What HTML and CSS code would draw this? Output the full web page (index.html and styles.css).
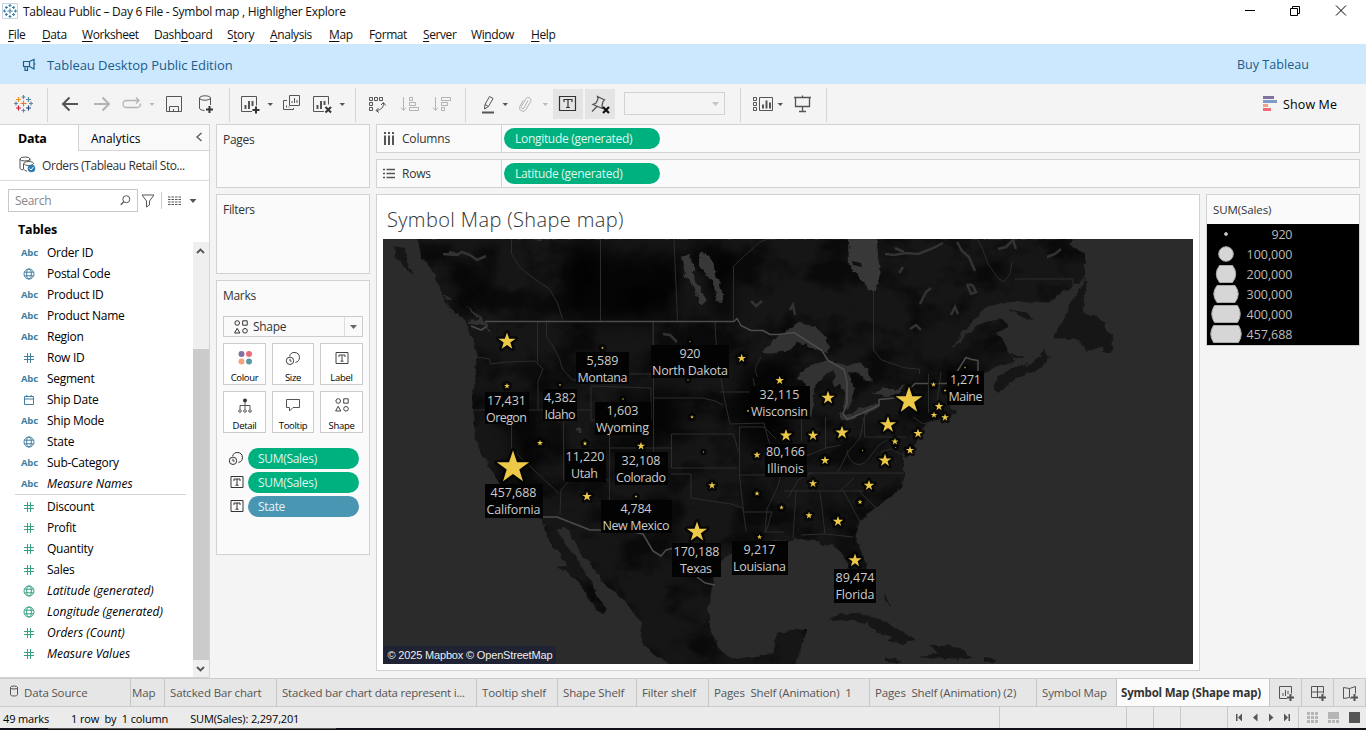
FILE: index.html
```html
<!DOCTYPE html>
<html lang="en">
<head>
<meta charset="utf-8">
<title>Tableau Public – Day 6 File</title>
<link rel="stylesheet" href="styles.css">
</head>
<body>
<svg class="defs" width="0" height="0">
  <defs>
    <symbol id="globe" viewBox="0 0 12 12"><g fill="none" stroke="currentColor" stroke-width="1"><circle cx="6" cy="6" r="5"/><ellipse cx="6" cy="6" rx="2.3" ry="5"/><path d="M1.5 4.2h9M1.5 7.8h9"/></g></symbol>
    <symbol id="hash" viewBox="0 0 12 12"><path d="M4.5 1v10M7.5 1v10M1 4.5h10M1 7.5h10" fill="none" stroke="currentColor"/></symbol>
    <symbol id="cal" viewBox="0 0 12 12"><path d="M1.5 2.5h9v8h-9zM1.5 5h9M3.8 .8v2M8.2 .8v2" fill="none" stroke="currentColor"/></symbol>
    <symbol id="tbox" viewBox="0 0 14 14"><path d="M1 1.5h12v11H1z" fill="none" stroke="currentColor"/><path d="M4 6V4h6v2M7 4v6.2M5.5 10.2h3" fill="none" stroke="currentColor"/></symbol>
    <symbol id="size" viewBox="0 0 16 16"><path d="M4.6 6.2a5 5 0 1 1 5.8 6.2" fill="none" stroke="currentColor"/><circle cx="5" cy="10.8" r="3.7" fill="none" stroke="currentColor"/><path d="M5 8.8v2.3h1.6" fill="none" stroke="currentColor"/></symbol>
    <symbol id="shapes" viewBox="0 0 14 14"><g fill="none" stroke="currentColor"><circle cx="3.2" cy="3" r="2.3"/><path d="M8.7.8h4.5v4.4H8.7zM3.2 8.3 5.8 13H.6z"/><circle cx="11" cy="10.8" r="2.3"/></g></symbol>
    <path id="s" class="star" d="M0-1 .235-.309.951-.309.37.118.588.809 0 .382-.588.809-.37.118-.951-.309-.235-.309z"/>
  </defs>
</svg>
<div class="app">
  <header class="titlebar">
    <svg class="app-icon" viewBox="0 0 16 16"><path d="M.5.5h15v15H.5z" fill="#fff" stroke="#c4d4de"/><g stroke="#3c7fa8" stroke-width="1.1" fill="none"><path d="M8 5.5v5M5.5 8h5M8 1v3M6.5 2.5h3M8 12v3M6.5 13.5h3M1 8h3M2.5 6.5v3M12 8h3M13.500 6.500v3M4.300 3v3M3 4.500h3M11.700 3v3M10 4.500h3M4.300 10v3M3 11.500h3M11.700 10v3M10 11.500h3"/></g></svg>
    <span class="title">Tableau Public – Day 6 File - Symbol map , Highligher Explore</span>
    <svg class="winctl" viewBox="1240 0 126 22"><g fill="none" stroke="#000"><path d="M1245 10.500h10M1290.500 8.500h7v7h-7zM1292.500 8.500v-2h7v7h-2M1336 5.500l10 10M1346 5.500l-10 10"/></g></svg>
  </header>
  <nav class="menu">
    <span style="width:34px"><u>F</u>ile</span><span style="width:40px"><u>D</u>ata</span><span style="width:72px"><u>W</u>orksheet</span><span style="width:73px">Dash<u>b</u>oard</span><span style="width:43px">S<u>t</u>ory</span><span style="width:59px"><u>A</u>nalysis</span><span style="width:40px"><u>M</u>ap</span><span style="width:54px">F<u>o</u>rmat</span><span style="width:48px"><u>S</u>erver</span><span style="width:60px">Wi<u>n</u>dow</span><span><u>H</u>elp</span>
  </nav>
  <div class="banner">
    <svg width="16" height="14" viewBox="0 0 16 14"><path d="M13 1.500v9.500L8.500 8.500H2.500v-5h6zM4 8.500v4h2.500v-4M13 6h1.500M8.500 3.500v5" fill="none" stroke="#1a5c8a" stroke-width="1.200"/></svg>
    <span class="edition">Tableau Desktop Public Edition</span>
    <span class="buy">Buy Tableau</span>
  </div>
  <div class="toolbar">
    <svg viewBox="0 84 47 40"><g fill="none" stroke-width="1.200"><path d="M23.500 100.500v6M20.500 103.500h6" stroke="#e8762c"/><path d="M23.500 95v4M21.500 97h4M14 103.500h4M16 101.500v4" stroke="#5b879b"/><path d="M23.500 108.500v4M21.500 110.500h4M29 103.500h4M31 101.500v4" stroke="#6a83a5"/><path d="M18.500 97v5M16 99.500h5" stroke="#eb912c"/><path d="M28.500 97v5M26 99.500h5" stroke="#59879b"/><path d="M18.500 105.500v5M16 108h5" stroke="#c72035"/><path d="M28.500 105.500v5M26 108h5" stroke="#1f457e"/></g></svg>
    <i class="sep"></i>
    <svg viewBox="48 84 38 40"><path d="M78 104H63M69.500 97.500 63 104l6.500 6.500" class="k k2"/></svg>
    <svg viewBox="86 84 31 40"><path d="M94 104h15M102.500 97.500l6.500 6.500-6.500 6.500" class="l k2"/></svg>
    <svg viewBox="117 84 43 40"><path d="M137 107.500h-10.500a3.500 3.500 0 0 1 0-7H139M136 97.500l3 3-3 3M137 107.500a3.500 3.500 0 0 0 3.500-4" class="l" stroke-width="1.300"/><path d="M149.500 103h5l-2.500 3z" fill="#bbb"/></svg>
    <svg viewBox="160 84 30 40"><path d="M166.500 96.500h15v15h-15zM169.500 111.500v-5h9v5M173.500 111v-2" class="k"/></svg>
    <svg viewBox="190 84 39 40"><g class="k"><ellipse cx="205" cy="98" rx="5.500" ry="2.200"/><path d="M199.500 98v10c0 1.500 2 2.300 5 2.500M210.500 98v7"/></g><path d="M206 109.500h7M209.500 106v7" class="b"/></svg>
    <i class="sep"></i>
    <svg viewBox="230 84 46 40"><path d="M252 111.500h-10.500v-15h15v9" class="k"/><path d="M245.500 109v-4M249 109v-8M252.500 106v-5" class="k k2"/><path d="M252.500 110h7M256 106.500v7" class="b"/><path d="M267.500 103h5.500l-2.750 3z" fill="#555"/></svg>
    <svg viewBox="276 84 30 40"><path d="M289.500 95.500h10v10h-10zM287 100.500h-3.500v9h10V108M292 103v-2M294.500 103v-5M297 103v-3M286.500 107.500v-2M289 107.500v-1" class="k"/></svg>
    <svg viewBox="306 84 49 40"><path d="M324 111.500h-10.500v-15h15v8" class="k"/><path d="M317.500 109v-4M321 109v-8M324.500 105v-4" class="k k2"/><path d="M325.500 107l5.500 5.500M331 107l-5.500 5.500" class="b"/><path d="M339.500 103h5.500l-2.750 3z" fill="#555"/></svg>
    <i class="sep"></i>
    <svg viewBox="356 84 37 40"><path d="M369.500 97.500h3v3h-3zM374.500 97.500h3v3h-3zM379.500 97.500h3v3h-3zM369.500 102.500h3v3h-3zM369.500 107.500h3v3h-3zM383.500 103c.5 4-2.500 7-7 7.500M381 105l2.500-2.500 2 3M378.500 108l-2.500 2.500 3 2" class="k"/></svg>
    <svg viewBox="393 84 33 40"><path d="M403.500 97v13M401 107.500l2.500 3 2.500-3M409.500 97.500h3v3h-3zM409.500 102.500h6v3h-6zM409.500 107.500h9v3h-9z" class="l"/></svg>
    <svg viewBox="426 84 39 40"><path d="M435.500 97v13M433 107.500l2.500 3 2.500-3M441.500 97.500h9v3h-9zM441.500 102.500h6v3h-6zM441.500 107.500h3v3h-3z" class="l"/></svg>
    <i class="sep"></i>
    <svg viewBox="466 84 46 40"><path d="M484.500 109l.5-4.500 4.500-8 3.500 2-4.500 8zM485 104.500l3.500 2" class="k"/><path d="M482 112.500h12" class="k k2"/><path d="M502.500 103h5.500l-2.750 3z" fill="#555"/></svg>
    <svg viewBox="512 84 41 40"><path d="M528 100.500l-4 7.500a1.500 1.500 0 0 1-2.600-1.500l4.600-8a2.800 2.800 0 0 1 4.800 2.800l-5 8.600a3.500 3.500 0 0 1-6-3.500l3.500-6" class="l"/><path d="M542.500 103h5.500l-2.750 3z" fill="#bbb"/></svg>
    <svg class="on" viewBox="553 84 30 40"><path d="M559.500 96.500h16v14h-16zM564 102v-2.500h8v2.500M568 99.500v8M566 107.500h4" fill="none" stroke="#333" stroke-width="1.200"/></svg>
    <i></i>
    <svg class="on" viewBox="585 84 30 40"><path d="M597.500 96.500l7 3.500-1.500 1.500-1 4 .5 3-9.500-4 3-1.500 2-4zM597 106.500l-5 5" class="k" stroke-width="1.300"/><path d="M603 107l6 6M609 107l-6 6" stroke="#111" stroke-width="2.200"/></svg>
    <div class="fit"><div class="combo"><svg width="8" height="5"><path d="M0 0h7L3.500 4z" fill="#c4c4c4"/></svg></div></div>
    <i class="sep"></i>
    <svg viewBox="741 84 47 40"><path d="M753.500 97.500h3v3h-3zM753.500 102.500h3v3h-3zM753.500 107.500h3v3h-3zM759.500 97.500h13v13h-13z" class="k"/><path d="M763 108.500v-4M766.500 108.500v-8M770 108.500v-6" class="k k2"/><path d="M777.500 103h5.500l-2.750 3z" fill="#555"/></svg>
    <svg viewBox="788 84 38 40"><path d="M794 97.500h17M795.500 98v8.500h14V98M802.500 95.500v2M802.500 107v4M799 111.500h7" class="k" stroke-width="1.300"/></svg>
    <i class="sep"></i>
    <div class="showme"><svg width="15" height="16"><path d="M0 0h11v3H0z" fill="#80729f"/><path d="M0 4h14v3H0z" fill="#7f9bcb"/><path d="M0 8h5v3H0z" fill="#eea385"/><path d="M0 12h8v3H0z" fill="#ee6b78"/></svg><span>Show Me</span></div>
  </div>

  <main class="work">
    <aside class="data">
      <div class="dtabs"><b>Data</b><span>Analytics<svg width="8" height="10" viewBox="0 0 8 10"><path d="M6.500 1 2 5l4.500 4" class="k" stroke-width="1.300"/></svg></span></div>
      <div class="source"><svg width="18" height="17" viewBox="0 0 18 17"><g class="k"><ellipse cx="6" cy="3" rx="5" ry="2"/><path d="M1 3v9c0 1 1.500 1.700 3 2M4.500 7.500v6M5 7.500c0-1 2-2 4.800-2s4.700 1 4.700 2-2 2-4.700 2S5 8.500 5 7.500M11 3v2M5 13.500c.5 1 1.500 1.300 3 1.500"/></g><circle cx="12.500" cy="12.500" r="3.800" fill="#2f7fae"/><path d="M10.500 12.500l1.500 1.500 2.500-3" stroke="#fff" fill="none"/></svg><span>Orders (Tableau Retail Sto...</span></div>
      <div class="searchrow">
        <div class="search"><span>Search</span><svg width="11" height="11"><circle cx="6.300" cy="4.200" r="3.500" class="k"/><path d="M3.800 6.800.8 9.800" class="k" stroke-width="1.300"/></svg></div>
        <svg width="14" height="14"><path d="M1 1h12L8.500 7v4l-3 2V7z" class="k"/></svg>
        <i></i>
        <svg width="30" height="12"><path d="M0 2h13M0 4.500h13M0 7h13M0 9.500h13" stroke="#555" stroke-dasharray="2.500 1"/><path d="M21.500 4h7L25 8z" fill="#555"/></svg>
      </div>
      <h3>Tables</h3>
      <div class="fieldwrap">
        <ul class="fields">
          <li><em>Abc</em>Order ID</li>
          <li><svg><use href="#globe"/></svg>Postal Code</li>
          <li><em>Abc</em>Product ID</li>
          <li><em>Abc</em>Product Name</li>
          <li><em>Abc</em>Region</li>
          <li><svg><use href="#hash"/></svg>Row ID</li>
          <li><em>Abc</em>Segment</li>
          <li><svg><use href="#cal"/></svg>Ship Date</li>
          <li><em>Abc</em>Ship Mode</li>
          <li><svg><use href="#globe"/></svg>State</li>
          <li><em>Abc</em>Sub-Category</li>
          <li class="it"><em>Abc</em>Measure Names</li>
          <li class="rule"></li>
          <li class="m"><svg><use href="#hash"/></svg>Discount</li>
          <li class="m"><svg><use href="#hash"/></svg>Profit</li>
          <li class="m"><svg><use href="#hash"/></svg>Quantity</li>
          <li class="m"><svg><use href="#hash"/></svg>Sales</li>
          <li class="m it"><svg><use href="#globe"/></svg>Latitude (generated)</li>
          <li class="m it"><svg><use href="#globe"/></svg>Longitude (generated)</li>
          <li class="m it"><svg><use href="#hash"/></svg>Orders (Count)</li>
          <li class="m it"><svg><use href="#hash"/></svg>Measure Values</li>
        </ul>
        <div class="scroll">
          <svg width="15" height="18"><path d="M4 11l3.500-3.500L11 11" fill="none" stroke="#555" stroke-width="1.800"/></svg>
          <div class="thumb"></div>
          <svg width="15" height="17"><path d="M4 7l3.500 3.500L11 7" fill="none" stroke="#555" stroke-width="1.800"/></svg>
        </div>
      </div>
    </aside>

    <section class="cards">
      <div class="card pages">Pages</div>
      <div class="card filters">Filters</div>
      <div class="card marks">
        <div>Marks</div>
        <div class="marktype"><svg width="14" height="14"><use href="#shapes"/></svg><span>Shape</span><i><svg width="8" height="5"><path d="M0 0h7L3.500 4z" fill="#666"/></svg></i></div>
        <div class="btns">
          <div><svg width="16" height="16"><circle cx="4.500" cy="4" r="3" fill="#80729f"/><circle cx="12" cy="4" r="3" fill="#ee6b78"/><circle cx="4.500" cy="11.500" r="3" fill="#f2a27d"/><circle cx="12" cy="11.500" r="3" fill="#5a9aa5"/></svg>Colour</div>
          <div><svg width="16" height="16"><use href="#size"/></svg>Size</div>
          <div><svg width="16" height="16" viewBox="-1 -1 16 16"><use href="#tbox" width="14" height="14"/></svg>Label</div>
          <div><svg width="16" height="16"><circle cx="8" cy="2.500" r="2" fill="#333"/><path d="M8 3v8M3 11V7.500h10V11" class="k"/><g class="k"><circle cx="3" cy="13" r="1.300"/><circle cx="8" cy="13" r="1.300"/><circle cx="13" cy="13" r="1.300"/></g></svg>Detail</div>
          <div><svg width="16" height="16"><path d="M1.500 1.500h13v8H8l-3.500 3.500v-3.500h-3z" class="k"/></svg>Tooltip</div>
          <div><svg width="16" height="16" viewBox="-1 0 16 16"><use href="#shapes" width="14" height="14"/></svg>Shape</div>
        </div>
        <div class="enc"><svg width="16" height="16"><use href="#size"/></svg><span class="pill">SUM(Sales)</span></div>
        <div class="enc"><svg width="14" height="14"><use href="#tbox"/></svg><span class="pill">SUM(Sales)</span></div>
        <div class="enc"><svg width="14" height="14"><use href="#tbox"/></svg><span class="pill dim">State</span></div>
      </div>
    </section>

    <section class="right">
      <div class="shelf"><div><svg width="12" height="13"><path d="M2 0v2M6 0v2M10 0v2M2 3.500V13M6 3.500V13M10 3.500V13" stroke="#555" stroke-width="2"/></svg>Columns</div><span class="pill">Longitude (generated)</span></div>
      <div class="shelf"><div><svg width="12" height="13"><path d="M0 2.500h2M0 6.500h2M0 10.500h2M3.500 2.500H12M3.500 6.500H12M3.500 10.500H12" stroke="#555" stroke-width="1.600"/></svg>Rows</div><span class="pill">Latitude (generated)</span></div>
      <div class="viewrow">
        <div class="view">
          <h1>Symbol Map (Shape map)</h1>
          <svg class="map" viewBox="383 239 810 425">
            <defs>
              <filter id="rough" x="-5%" y="-5%" width="110%" height="110%"><feTurbulence type="fractalNoise" baseFrequency=".14" numOctaves="3" seed="4"/><feDisplacementMap in="SourceGraphic" scale="6" xChannelSelector="R" yChannelSelector="G"/></filter>
              <filter id="tex" x="0" y="0" width="100%" height="100%"><feTurbulence type="fractalNoise" baseFrequency=".022 .028" numOctaves="4" seed="11"/><feColorMatrix values="0 0 0 0 0  0 0 0 0 0  0 0 0 0 0  4 0 0 0 -1.750"/><feComposite in2="SourceGraphic" operator="in"/></filter>
              <filter id="blur"><feGaussianBlur stdDeviation="9"/></filter>
              <path id="land" d="M418 239 421 258 427 263 433 272 438 283 441 292 446 303 454 311 466 321 468 330 472 340 476 350 477 357 476 370 475 380 472 392 472 400 474 420 474 430 476 439 480 450 486 462 493 473 498 481 502 490 518 498 528 503 536 512 542 520 547 537 553 546 560 553 566 566 557 567 569 573 580 583 585 591 590 602 602 614 606 609 600 600 595 593 592 582 584 571 576 557 569 550 564 541 558 530 563 526 568 531 574 541 579 550 583 557 593 567 601 578 607 587 616 592 627 603 634 614 642 623 640 632 642 642 657 657 670 665H797L799 655 803 643 807 629 796 630 777 633 774 645 773 653 757 657 745 657 737 659 728 656 720 650 714 640 710 627 708 607 713 585 714 570 722 560 732 553 742 551 754 558 768 562 780 558 772 541H780L800 539 815 539 823 546 832 543 842 553 847 563 851 577 857 590 864 592 867 577 866 565 860 550 855 537 860 522 866 515 877 507 884 501 890 497 903 487 904 478 904 465 901 452 906 458 914 447 919 437 917 434 927 423 940 420 957 413 950 407 948 397 952 387 968 379 985 373 1000 366 1015 362 1007 349 1002 337 993 334 1008 327 1003 319 990 321 978 326 968 333 953 348 960 335 967 327 978 316 990 305 1020 302 1050 303 1060 293 1072 287 1085 279V255L1078 250 1070 245 1072 239Z"/>
            </defs>
            <path d="M383 239h810v425H383z" fill="#2b2b2b"/>
            <g filter="url(#rough)" fill="#151515">
              <use href="#land"/>
              <path d="M394 246l10 2 4 14 6 14-10-9-8-11zM993 389l5-12 14-9 17-4 12-7 1-8 8 8-9 12-16 5-14 8-13 10zM1010 354l14 2 2 3-12-1zM1053 338l10-17 9-19 13-22 3 2-5 20-1 11 14 2 8 6 2 11 7 4-1 16-8 0-5-5-12 5-5-9-8-4zM1010 309l20 5 3 6-12-3zM829 621l11-7 18-1 22 6 20 12 17 9-12 3-18-1 6-5-14-4-13-10-19-3zM930 645l14 0 20 5 8 8-11 1-13-2-11 2-18-2 20-3zM885 657l11 1 5 5-14-1zM984 657l13 2-3 3-10 0zM885 594l4 6-2 4-3-4zM888 602l3 2-1 2z"/>
            </g>
            <use href="#land" filter="url(#tex)" opacity=".5"/>
            <g fill="#060606" opacity=".75" filter="url(#blur)"><path d="M565 245h35l28 20 20 45-15 12h-60zM610 262l60-10 8 60-40 8z"/><path d="M712 250h20v70h-18zM455 262l20 15 5 20-15 8zM500 400h40v70l-20-10zM740 370h50v80h-45z"/><path d="M640 390h40v50h-40z"/></g>
            <g filter="url(#rough)" fill="#333">
              <path d="M762 352l8-7 10-11 14-7 6-5 8 3 8 1 10 12 3 14-11-2-12-5-9-3-8 8-14 3z"/>
              <path d="M797 379l8-11 16-7 12 0 4 5-10 8-6 6-7 8-1 20-4 11-4-2 2-16-3-8 2-10zM829 361l8 1 10 4 10-3 10 4 5 14-8-2-8-6-7-1 4 14-1 14-4 10-4-4 1-14-5-8-6 3 1-14zM840 412l6 3 10-4 11-4 10-5 3 2-9 7-11 4-12 6-8-3zM872 393l10-4 14 0 9-6-4 10-14 4z"/>
              <path d="M465 305l10 7 8 8 4 3 4 12-6-9-14-2-5-3 12-1-6-8zM443 294l10 6-7-1z"/>
            </g>
            <g filter="url(#rough)" fill="#2d2d2d"><path d="M848 238h29l1 19 3 18-6 16-7-2-11-15-8-9zM681 257l9-3 3 8 0 14 5 8 9 17-5 5-6-12-5-13-6-4-1-10zM699 252l8 1 6 8 4 18 6 13 0 10-5-1-4-15-8-12-7-9z" fill="#383838"/></g>
            <path d="M852 261l9 2 1 4-9-2z" fill="#111"/>
            <g class="lk">
              <path d="M443 254l14 1 5-3 8 3 7 5 9-4M458 255l-9-3M885 254l9 1 12-2 12 1 13-5 12-6M895 248l9 4M957 242l5 9 7 6 6 14M998 249l8-2 7-7 3 9M1047 257l8-3 6-5M920 304l6-12 5-4M967 284l4 10 5-2-3-6-4-2M790 310l3-5 2 10M751 301l5 5 6-5M663 334l7 1 5 5 2 2M910 329l6-4 5 5M951 315l4-8 3 7M899 273l4-6M576 430l4-2M580 428l0 5"/>
            </g>
            <g class="st">
              <path d="M511.500 239v15l8 13 15 12 15 10 8 14 5 16M600.500 239v82M674 239l3.500 82M733.500 321v-55l26-24 8-3M873.500 290v60l8 10 12 4 12 4 14 1v5M1015 279h58v8M978 240l5 10 5 14 10 14 6 4 6-8 2-12M477 357l12 2 2 5 16-2 28-1 8 8-5 12v28M537.500 321v41M546.500 321v16l7 10 6 12 3 10 10 11h17M472 410h119M511.500 411v38l47 44M563.500 410v70M591 386v34h60V388zM629 374h24v-53M653.500 321v160M653 398h50l12 3 8 4M653 364h67l-4-22-1-20M671.500 434h62l5 18M671.500 434v14h-62v-28M671.500 448v20h66M609.500 420v107M570 480l-9 10-1 25M564 480h45M720 392h36l-3-14M720 372l5 30 5 22 34-1M739.500 426v50l4 36M671 474h20v24l20 3 20 3 12 4 3 23M739.500 475h38M744 512h28l-6 20h18M740 427h24l12 12M758 377c-6-8 0-14 3-20M764 423c5 20 9 34 16 48 2 11-6 23-13 38l-2 24M796 491l-3 47M820 491l5 43-24 1M825 534l28 3M784 491h68l20 0M808 473h96M788 498l10-18 14-7M801.500 415v26M825.500 417v31M786 460l20-4 20-8 15-3M864.500 407v30h42M864 418l-4 20-12 14-10 20M847 450c2 17 16 18 22 8l10-13 8-5M840 491l14-13M859 491l25 25 14 8M843 490l14 26 5 10M928.500 374v40M941 372l-5 38M913 417l10 7 14-4M881 452l10-3 12 6"/>
            </g>
            <path class="nat" d="M485 321.500h249l3-3 4 7 10 5 12 0 7 4h8l16-2 28 18 6 10 16 9 3 12 0 22-4 10 4 6 12-5 20-9 0-6 22-2 14-14h31l6-4 14-22 6 2 6 1 0 17 4 8M542 517h15l33 13h35l18 4 10 17 8 5 5-6 8-2M697 577l8 6 10 2M471 326l10 4 5-3"/>
            <g class="stars">
              <use href="#s" transform="translate(507 341.500)scale(9)"/><use href="#s" transform="translate(507 386)scale(3)"/><use href="#s" transform="translate(602.500 348)scale(1.500)"/><use href="#s" transform="translate(560 385)scale(1.300)"/><use href="#s" transform="translate(623 399)scale(1.200)"/><use href="#s" transform="translate(690 341.500)scale(1)"/><use href="#s" transform="translate(688 380)scale(1)"/><use href="#s" transform="translate(741.700 358.300)scale(4.500)"/><use href="#s" transform="translate(779.700 380.500)scale(4.500)"/><use href="#s" transform="translate(748 411)scale(1.500)"/><use href="#s" transform="translate(692 417)scale(2)"/><use href="#s" transform="translate(828 397.800)scale(7)"/><use href="#s" transform="translate(540 443)scale(3.200)"/><use href="#s" transform="translate(585 443.500)scale(2.400)"/><use href="#s" transform="translate(641 446)scale(4.300)"/><use href="#s" transform="translate(513 467.500)scale(17)"/><use href="#s" transform="translate(587 496.500)scale(5)"/><use href="#s" transform="translate(636 496.500)scale(1.400)"/><use href="#s" transform="translate(703.500 452)scale(1)"/><use href="#s" transform="translate(712 485.500)scale(3.900)"/><use href="#s" transform="translate(697 532)scale(10.500)"/><use href="#s" transform="translate(757 455)scale(3.800)"/><use href="#s" transform="translate(757 493.500)scale(2.800)"/><use href="#s" transform="translate(786 435.500)scale(6.500)"/><use href="#s" transform="translate(813 435.500)scale(5.500)"/><use href="#s" transform="translate(842 432.700)scale(7)"/><use href="#s" transform="translate(825 460.500)scale(4.700)"/><use href="#s" transform="translate(862.500 450.500)scale(1)"/><use href="#s" transform="translate(888 424.800)scale(8.500)"/><use href="#s" transform="translate(909 400.500)scale(14)"/><use href="#s" transform="translate(885 460.500)scale(6.800)"/><use href="#s" transform="translate(895.700 447.500)scale(.8)"/><use href="#s" transform="translate(895 441.500)scale(3.600)"/><use href="#s" transform="translate(918 433.500)scale(4.800)"/><use href="#s" transform="translate(910 450.300)scale(4.300)"/><use href="#s" transform="translate(933.500 384.500)scale(2.700)"/><use href="#s" transform="translate(945 390.500)scale(1.500)"/><use href="#s" transform="translate(934 415)scale(3.500)"/><use href="#s" transform="translate(945 417.500)scale(4)"/><use href="#s" transform="translate(939 406.500)scale(4.500)"/><use href="#s" transform="translate(965 367.500)scale(1.200)"/><use href="#s" transform="translate(813 483.500)scale(4.300)"/><use href="#s" transform="translate(869 485.500)scale(5.500)"/><use href="#s" transform="translate(860 502)scale(2.700)"/><use href="#s" transform="translate(781.500 507.500)scale(2.400)"/><use href="#s" transform="translate(809 515.500)scale(3.700)"/><use href="#s" transform="translate(838 521.500)scale(5.500)"/><use href="#s" transform="translate(855 560.500)scale(7)"/><use href="#s" transform="translate(759.500 537)scale(2.700)"/>
            </g>
            <g fill="#030303"><path d="M576 352h53v32h-53zM651 345h78v33h-78zM485 392h44v32h-44zM543 389h34v32h-34zM595 402h56v33h-56zM750 386h60v33h-60zM565 449h41v33h-41zM615 452h53v33h-53zM485 484h58v34h-58zM601 500h71v33h-71zM672 543h49v34h-49zM732 541h56v34h-56zM765 444h42v33h-42zM834 569h42v34h-42zM947 371h37v34h-37z"/></g>
            <g class="lab">
              <text x="602.500" y="365" textLength="32">5,589</text><text x="602.500" y="382" textLength="50">Montana</text>
              <text x="690" y="358" textLength="21">920</text><text x="690" y="375" textLength="76">North Dakota</text>
              <text x="506.500" y="405" textLength="39">17,431</text><text x="506.500" y="422" textLength="41">Oregon</text>
              <text x="560" y="402" textLength="32">4,382</text><text x="560" y="419" textLength="31">Idaho</text>
              <text x="622.500" y="415" textLength="32">1,603</text><text x="622.500" y="432" textLength="53">Wyoming</text>
              <text x="779.500" y="399" textLength="40">32,115</text><text x="779.500" y="416" textLength="57">Wisconsin</text>
              <text x="585" y="461" textLength="39">11,220</text><text x="584.500" y="478" textLength="27">Utah</text>
              <text x="641" y="465" textLength="39">32,108</text><text x="641" y="482" textLength="50">Colorado</text>
              <text x="513.500" y="497" textLength="46">457,688</text><text x="513.500" y="514" textLength="54">California</text>
              <text x="636" y="513" textLength="31">4,784</text><text x="636" y="530" textLength="67">New Mexico</text>
              <text x="696.500" y="556" textLength="46">170,188</text><text x="696" y="573" textLength="32">Texas</text>
              <text x="759.500" y="554" textLength="32">9,217</text><text x="759.500" y="571" textLength="53">Louisiana</text>
              <text x="785.500" y="456" textLength="39">80,166</text><text x="785.500" y="473" textLength="37">Illinois</text>
              <text x="855" y="582" textLength="39">89,474</text><text x="855" y="599" textLength="39">Florida</text>
              <text x="965.500" y="384" textLength="31">1,271</text><text x="965.500" y="401" textLength="34">Maine</text>
            </g>
            <path d="M383 646h173v18H383z" fill="#1f2333"/>
            <text class="credit" x="387.500" y="659" textLength="165">© 2025 Mapbox © OpenStreetMap</text>
          </svg>
        </div>
        <div class="legend">
          <div class="lt">SUM(Sales)</div>
          <svg width="152" height="121" viewBox="1207 224 152 121"><path d="M1207 224h152v121h-152z"/><g fill="#d6d6d6" stroke="#aaa"><circle cx="1226" cy="234" r="1.500"/><circle cx="1226" cy="254" r="7.300"/><path d="M1219.500 265.500h13q6.500 8.500 0 17h-13q-6.500-8.500 0-17zM1217 285.500h18q6.500 8.500 0 17h-18q-6.500-8.500 0-17zM1214.500 305.500h23q5.500 8.500 0 17h-23q-5.500-8.500 0-17zM1213.500 325.500h25q5.500 8.500 0 17h-25q-5.500-8.500 0-17z"/></g>
          <g class="lg"><text x="1292.500" y="239" textLength="21">920</text><text x="1292.500" y="259" textLength="46">100,000</text><text x="1292.500" y="279" textLength="46">200,000</text><text x="1292.500" y="299" textLength="46">300,000</text><text x="1292.500" y="319" textLength="46">400,000</text><text x="1292.500" y="339" textLength="46">457,688</text></g></svg>
        </div>
      </div>
    </section>
  </main>

  <footer class="tabs">
    <span class="ds"><svg width="10" height="12"><g class="k"><ellipse cx="5" cy="2.500" rx="3.500" ry="1.500"/><path d="M1.500 2.500v7c0 1 1.500 1.500 3.500 1.500s3.500-.5 3.500-1.500v-7"/></g></svg>Data Source</span>
    <span class="tight">Map</span><span>Satcked Bar chart</span><span class="long">Stacked bar chart data represent i...</span><span>Tooltip shelf</span><span>Shape Shelf</span><span>Filter shelf</span><span>Pages&nbsp; Shelf (Animation)&nbsp; 1</span><span>Pages&nbsp; Shelf (Animation) (2)</span><span>Symbol Map</span><b>Symbol Map (Shape map)</b>
    <span class="new"><svg width="17" height="17"><path d="M9 13.500H1.500v-12h12v7" class="k"/><path d="M5 11V8M7.500 11V5M10 9V6" class="k"/><path d="M9 12.500h7M12.500 9v7" class="k k2"/></svg></span>
    <span class="new"><svg width="17" height="17"><path d="M9 12.500H1.500v-11h12v7M7.500 1.500v11M1.500 7h12" class="k"/><path d="M9 12.500h7M12.500 9v7" class="k k2"/></svg></span>
    <span class="new"><svg width="17" height="17"><path d="M9 13.500l-1.500-1-6 1v-11l6 1 6-2v7M7.500 3.500v9" class="k"/><path d="M9 12.500h7M12.500 9v7" class="k k2"/></svg></span>
  </footer>
  <div class="status">
    <span>49 marks</span><span>1 row&nbsp; by&nbsp; 1 column</span><span>SUM(Sales): 2,297,201</span>
    <svg viewBox="980 707 386 21"><path d="M999.500 707v21M1126.500 707v21M1153.500 707v21M1180.500 707v21M1227.500 707v21M1298.500 707v21" stroke="#c9c9c9"/><path d="M1236 714h1.500v7H1236zM1242 713.500v8l-4-4zM1257.500 713.500v8l-4.500-4zM1269 713.500v8l4.500-4zM1284 713.500v8l4-4zM1288.500 714h1.500v7h-1.500zM1349 712h11v11h-11z" fill="#555"/><path d="M1307 712h3v3h-3zM1311 712h3v3h-3zM1315 712h3v3h-3zM1307 716h3v3h-3zM1311 716h3v3h-3zM1315 716h3v3h-3zM1307 720h3v3h-3zM1311 720h3v3h-3zM1315 720h3v3h-3zM1328 712h11v7h-11zM1328 720h3v3h-3zM1332 720h3v3h-3zM1336 720h3v3h-3z" fill="#b5b5b5"/></svg>
  </div>
  <div class="taskbar"><i></i></div>
</div>
</body>
</html>
```
FILE: styles.css
```css
* { box-sizing: border-box; }
body { margin: 0; font: 12px "Open Sans", "Noto Sans", sans-serif; color: #111; overflow: hidden; }
.defs { position: absolute; }
svg { display: block; flex: none; }
.app { width: 1366px; height: 730px; display: flex; flex-direction: column; background: #f4f4f4; white-space: nowrap; }
.k { fill: none; stroke: #555; }
.l { fill: none; stroke: #b3b3b3; }
.k2 { stroke-width: 2; }
.b { fill: none; stroke: #333; stroke-width: 2; }

.titlebar { height: 22px; background: #fff; display: flex; align-items: center; padding-left: 2px; }
.app-icon { width: 16px; height: 16px; margin-right: 5px; }
.title { letter-spacing: -.26px; padding-top: 1px; }
.winctl { width: 126px; height: 22px; margin-left: auto; }
.menu { height: 22px; background: #fff; display: flex; align-items: center; padding: 2px 0 0 8px; letter-spacing: -.4px; }
.menu u { text-underline-offset: 2px; }
.banner { height: 40px; background: #cce8ff; display: flex; align-items: center; padding: 2px 57px 0 21px; color: #1a5c8a; font-size: 13px; }
.edition { margin-left: 10px; letter-spacing: -.05px; }
.buy { margin: 0 0 2px auto; font-size: 12.500px; letter-spacing: .05px; }

.toolbar { height: 40px; display: grid; grid-template-columns: 47px 1px 38px 31px 43px 30px 39px 1px 46px 30px 49px 1px 37px 33px 39px 1px 46px 41px 30px 2px 30px 125px 1px 47px 38px 1px 1fr; }
.toolbar > svg { width: 100%; height: 40px; }
.toolbar .on { background: linear-gradient(#e4e4e4, #e4e4e4) 0 5px / 100% 30px no-repeat; }
.sep { background: #d4d4d4; margin: 4px 0 2px; }
.fit { padding: 8px 0 0 9px; }
.combo { width: 101px; height: 23px; border: 1px solid #d2d2d2; padding: 9px 0 0 87px; }
.showme { display: flex; justify-content: flex-end; align-items: center; gap: 5px; padding-right: 29px; font-size: 12.500px; letter-spacing: .1px; color: #000; }

.work { height: 554px; display: flex; }
.data { width: 210px; background: #fff; border: 1px solid #d4d4d4; border-left: 0; display: flex; flex-direction: column; }
.dtabs { display: flex; height: 26px; align-items: center; font-size: 12px; color: #000; }
.dtabs b { width: 78px; padding: 1px 0 0 18px; font-size: 12.500px; letter-spacing: -.3px; }
.dtabs span { flex: 1; height: 26px; background: #f9f9f9; border: 1px solid #d4d4d4; border-width: 0 0 1px 1px; padding: 5px 6px 0 12px; display: flex; justify-content: space-between; }
.dtabs svg { margin-top: 2px; }
.source { height: 30px; border-bottom: 1px solid #dcdcdc; display: flex; align-items: center; gap: 5px; padding-left: 19px; color: #333; letter-spacing: -.42px; }
.source svg { margin-top: -2px; }
.searchrow { display: flex; align-items: center; padding: 8px 0 0 8px; height: 31px; }
.search { width: 130px; height: 23px; border: 1px solid #c8c8c8; display: flex; align-items: center; justify-content: space-between; padding: 0 6px 0 6px; color: #888; margin-right: 3px; letter-spacing: -.3px; }
.searchrow > i { width: 1px; height: 17px; background: #ccc; margin: 0 6px; }
.data h3 { margin: 0; height: 30px; padding: 9px 0 0 18px; font-size: 12.500px; letter-spacing: -.2px; color: #000; }
.fieldwrap { display: flex; flex: 1; }
.fields { list-style: none; margin: 0; padding: 0; flex: 1; color: #000; letter-spacing: -.27px; }
.fields li { height: 21px; display: flex; align-items: center; }
.fields em { width: 26px; margin-left: 21px; color: #3f7fa0; flex: none; font: bold 9.500px "Open Sans", sans-serif; letter-spacing: -.2px; }
.fields li > svg { width: 12px; height: 12px; margin: 0 12px 0 23px; color: #3f7fa0; }
.fields .m > svg { color: #36a083; }
.fields .it { font-style: italic; letter-spacing: 0; }
.fields .rule { height: 2px; margin: 0 7px 0 15px; border-top: 1px solid #d4d4d4; }
.scroll { width: 16px; background: #efefef; display: flex; flex-direction: column; }
.thumb { margin-top: 89px; flex: 1; background: #cbcbcb; }

.cards { width: 160px; padding-left: 6px; display: flex; flex-direction: column; gap: 6px; color: #333; letter-spacing: -.3px; }
.card { width: 154px; border: 1px solid #d2d2d2; background: #fafafa; padding: 6px; }
.pages { height: 64px; }
.filters { height: 80px; }
.marks { height: 275px; }
.marktype { margin-top: 12px; width: 140px; height: 21px; border: 1px solid #ccc; display: flex; align-items: center; padding-left: 10px; }
.marktype span { margin-left: 5px; flex: 1; }
.marktype i { width: 18px; height: 19px; border-left: 1px solid #ddd; padding: 8px 0 0 5px; }
.btns { display: grid; grid-template-columns: 43px 42px 43px; gap: 6px; margin: 6px 0 14px; width: 140px; }
.btns div { height: 42px; border: 1px solid #ccc; background: #fff; font-size: 9.500px; color: #000; display: flex; flex-direction: column; align-items: center; padding-top: 6px; gap: 5px; line-height: 13px; }
.btns svg { color: #444; }
.enc { display: flex; align-items: center; justify-content: flex-end; gap: 4px; height: 22px; margin: 0 4px 2px 0; }
.enc .pill { width: 111px; }
.pill { background: #00b180; color: #dff7ee; border-radius: 11px; height: 21px; line-height: 21px; padding-left: 11px; letter-spacing: -.3px; }
.enc .pill { padding-left: 10px; }
.pill.dim { background: #4996b2; color: #e6f3f8; }

.right { flex: 1; padding-left: 6px; display: flex; flex-direction: column; gap: 6px; }
.shelf { width: 984px; height: 29px; border: 1px solid #d2d2d2; background: #fafafa; display: flex; align-items: center; color: #333; letter-spacing: -.2px; }
.shelf > div { width: 125px; height: 27px; border-right: 1px solid #d2d2d2; display: flex; align-items: center; gap: 7px; padding-left: 6px; }
.shelf .pill { width: 156px; margin-left: 2px; }
.viewrow { display: flex; gap: 6px; align-items: flex-start; }
.view { width: 824px; height: 477px; background: #fff; border: 1px solid #d2d2d2; padding: 0 6px; }
.view h1 { margin: 0 0 0 4px; height: 44px; padding-top: 10px; font: 300 20px/30px "Open Sans", sans-serif; letter-spacing: .38px; color: #333; }
.map { width: 810px; height: 425px; }
.star { fill: #edc948; stroke: rgba(0,0,0,.65); stroke-width: 5px; stroke-linejoin: round; vector-effect: non-scaling-stroke; paint-order: stroke; }
.st { fill: none; stroke: #2c2c2c; }
.lk { fill: none; stroke: #333; stroke-width: 2.500; }
.nat { fill: none; stroke: #4c4c4c; stroke-width: 1.500; stroke-linejoin: round; }
.lab { font: 12.500px "Open Sans", sans-serif; fill: #ccc; text-anchor: middle; }
.credit { font: 11px "Liberation Sans", sans-serif; fill: #eee; }
.legend { width: 154px; height: 152px; border: 1px solid #d2d2d2; background: #fafafa; color: #333; }
.lt { height: 29px; padding: 7px 6px; font-size: 11.500px; letter-spacing: -.1px; }
.lg { font: 12.500px "Open Sans", sans-serif; fill: #bbb; text-anchor: end; }

.tabs { height: 29px; border: 1px solid #cbcbcb; border-width: 1px 0; background: #e6e6e6; display: grid; grid-template-columns: 131px 34px 112px 200px 81px 79px 72px 161px 167px 80px 153px 32px 32px 32px; font-size: 11.500px; letter-spacing: -.15px; color: #555; }
.tabs > * { border-right: 1px solid #c6c6c6; padding-left: 5px; line-height: 28px; overflow: hidden; }
.tabs .ds { display: flex; align-items: center; gap: 5px; padding: 0 0 0 9px; }
.tabs .ds svg { margin-top: -3px; }
.tabs .tight { padding-left: 1px; }
.tabs .long { letter-spacing: -.22px; }
.tabs b { background: #fbfbfb; color: #333; padding-left: 4px; letter-spacing: -.2px; }
.tabs .new { padding: 6px 0 0 8px; }
.status { height: 21px; background: #ebebeb; display: flex; align-items: center; padding: 1px 0 0 3px; font-size: 11px; letter-spacing: -.15px; color: #000; }
.status span { margin-right: 22px; }
.status svg { margin: -1px 0 0 auto; width: 386px; height: 21px; }
.taskbar { height: 2px; background: #101018; padding-left: 48px; }
.taskbar i { display: block; width: 288px; height: 1px; background: #555; }
```
